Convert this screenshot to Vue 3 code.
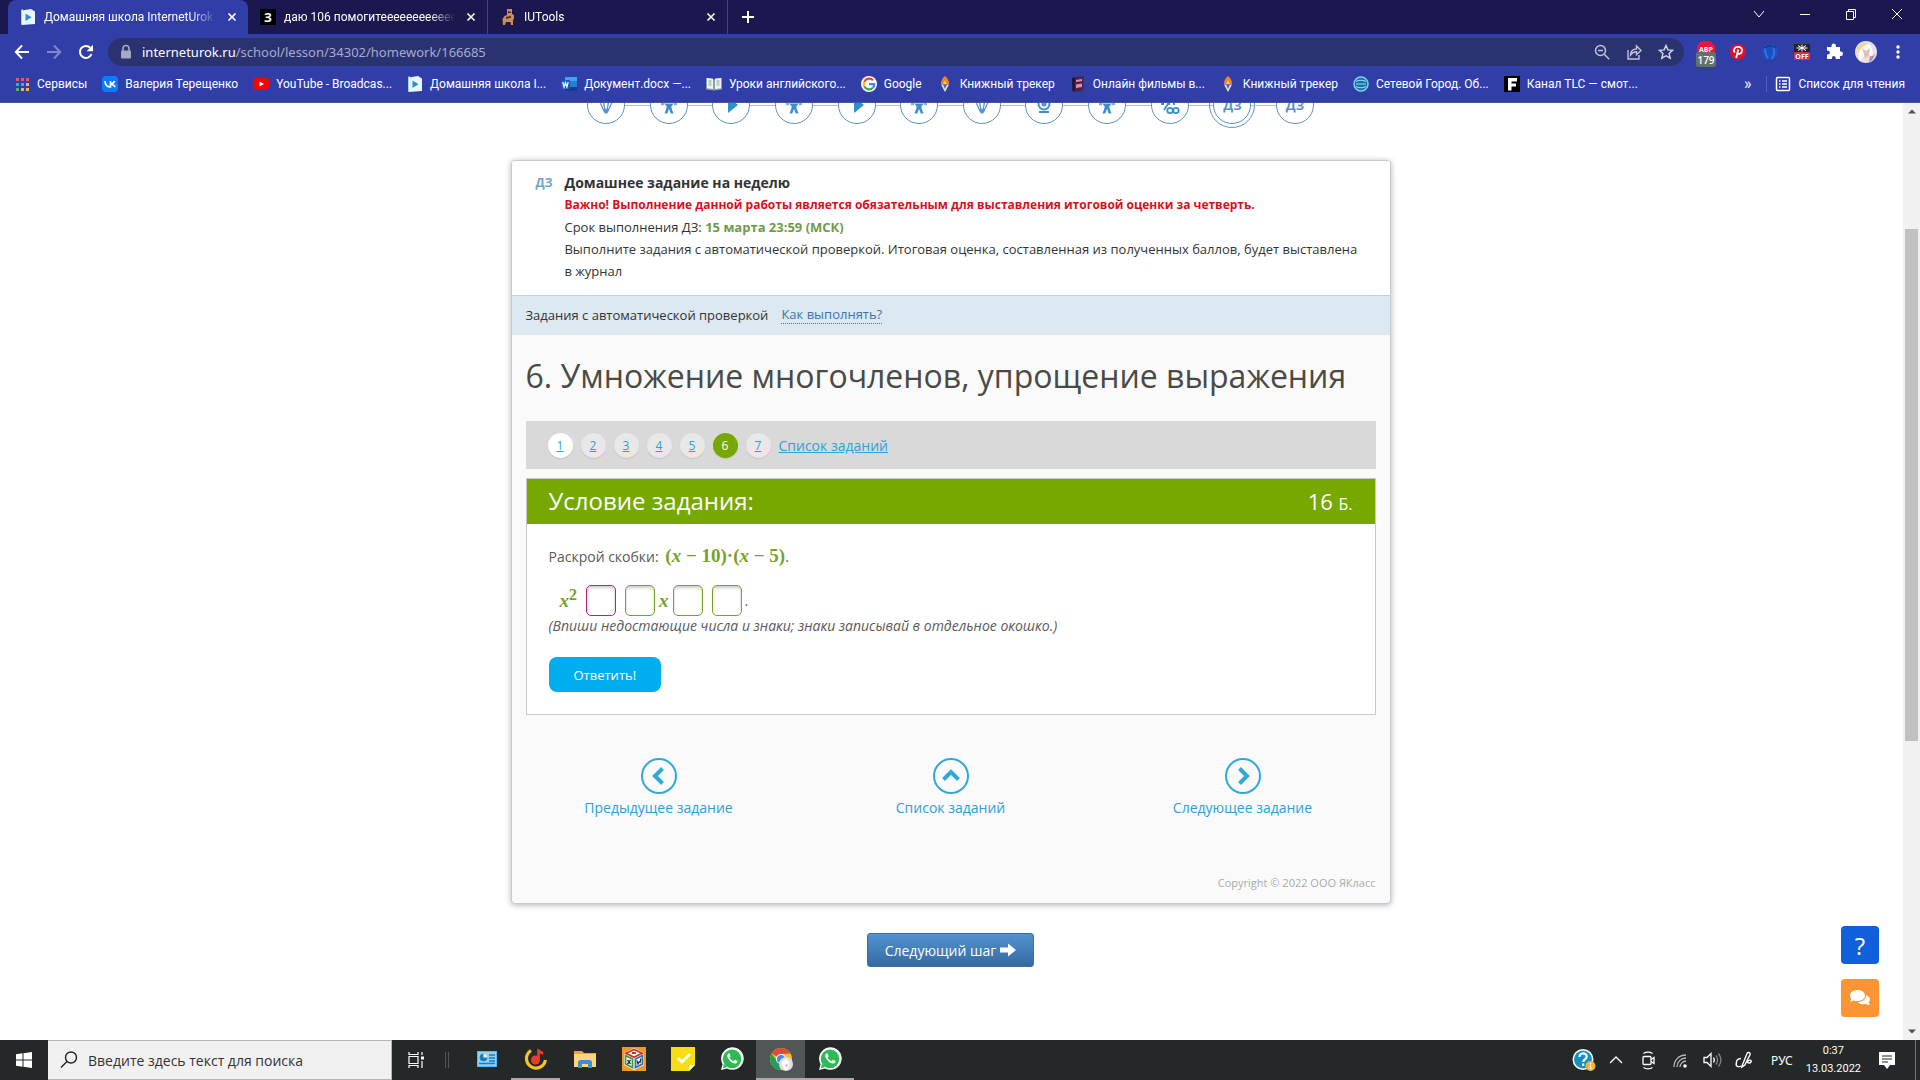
<template>
  <div class="screen">
    <header class="browser">
      <div class="tabstrip">
        <div v-for="tab in tabs" :key="tab.title" class="tab" :class="{ active: tab.active }">
          <svg class="ico" viewBox="0 0 16 16" v-html="icons[tab.icon]"></svg>
          <span class="tab-title">{{ tab.title }}</span>
          <button class="icon-btn close" aria-label="Закрыть вкладку">
            <svg viewBox="0 0 10 10"><path d="M1.5 1.5l7 7M8.5 1.5l-7 7" stroke="#fff" stroke-width="1.7" /></svg>
          </button>
        </div>
        <button class="icon-btn plus" aria-label="Новая вкладка">
          <svg viewBox="0 0 12 12"><path d="M6 0v12M0 6h12" stroke="#fff" stroke-width="2" /></svg>
        </button>
        <div class="window-controls">
          <button v-for="c in controls" :key="c.label" class="icon-btn" :aria-label="c.label">
            <svg viewBox="0 0 12 12" fill="none" stroke="#fff"><path :d="c.d" /></svg>
          </button>
        </div>
      </div>

      <div class="toolbar">
        <button class="icon-btn tool" aria-label="Назад">
          <svg viewBox="0 0 16 16" fill="none" stroke="#fff" stroke-width="2"><path d="M15 8H2M8 1.5L1.8 8 8 14.5" /></svg>
        </button>
        <button class="icon-btn tool" aria-label="Вперёд">
          <svg viewBox="0 0 16 16" fill="none" stroke="#8087cf" stroke-width="2"><path d="M1 8h13M8 1.5L14.2 8 8 14.5" /></svg>
        </button>
        <button class="icon-btn tool" aria-label="Обновить">
          <svg viewBox="0 0 16 16" fill="none" stroke="#fff" stroke-width="2"><path d="M13.5 10.2A6 6 0 1 1 12.3 3.8" /><path d="M15 0.8v6.4H8.6z" fill="#fff" stroke="none" /></svg>
        </button>
        <div class="omnibox">
          <svg class="lock" viewBox="0 0 12 16"><path d="M3 7V4.5a3 3 0 0 1 6 0V7" fill="none" stroke="#a6a9c4" stroke-width="1.6" /><rect x="1" y="6.5" width="10" height="8" rx="1" fill="#a6a9c4" /></svg>
          <span class="url"><b>interneturok.ru</b>/school/lesson/34302/homework/166685</span>
          <button v-for="n in ['zoom', 'share', 'star']" :key="n" class="icon-btn omni" :aria-label="n">
            <svg class="ico" viewBox="0 0 16 16" v-html="icons[n]"></svg>
          </button>
        </div>
        <div class="extensions">
          <button v-for="n in ['abp', 'pin', 'globe', 'off', 'puzzle', 'avatar', 'dots']" :key="n" class="icon-btn ext" :aria-label="n">
            <svg viewBox="0 0 24 32" v-html="icons[n]"></svg>
          </button>
        </div>
      </div>

      <nav class="bookmarks">
        <a v-for="(b, i) in bookmarks" :key="i" href="#" class="bookmark">
          <svg class="ico" viewBox="0 0 16 16" v-html="icons[b.icon]"></svg>
          <span>{{ b.title }}</span>
        </a>
        <span class="more">»</span>
        <a href="#" class="bookmark reading">
          <svg class="ico" viewBox="0 0 16 16" v-html="icons.list"></svg>
          <span>Список для чтения</span>
        </a>
      </nav>
    </header>

    <div class="viewport">
      <main class="page">
        <div class="steps">
          <template v-for="(s, i) in steps" :key="i">
            <i v-if="i" class="line"></i>
            <a href="#" class="step" :class="{ current: i === 10 }">
              <span v-if="s === 'hw'">ДЗ</span>
              <svg v-else viewBox="0 0 20 20" v-html="icons[s]"></svg>
            </a>
          </template>
        </div>

        <section class="card">
          <div class="card-head">
            <span class="mark">ДЗ</span>
            <div>
              <h1>Домашнее задание на неделю</h1>
              <p class="warn">Важно! Выполнение данной работы является обязательным для выставления итоговой оценки за четверть.</p>
              <p>Срок выполнения ДЗ: <b>15 марта 23:59 (МСК)</b></p>
              <p>Выполните задания с автоматической проверкой. Итоговая оценка, составленная из полученных баллов, будет выставлена в&nbsp;журнал</p>
            </div>
          </div>
          <div class="info">
            <span>Задания с автоматической проверкой</span>
            <a href="#">Как выполнять?</a>
          </div>

          <div class="card-body">
            <h2>6. Умножение многочленов, упрощение выражения</h2>
            <nav class="pager">
              <a v-for="n in 7" :key="n" href="#" :class="{ first: n === 1, on: n === 6 }">{{ n }}</a>
              <a href="#" class="all">Список заданий</a>
            </nav>

            <form class="task" @submit.prevent>
              <div class="task-head">
                <span>Условие задания:</span>
                <span class="points">16 <small>Б.</small></span>
              </div>
              <div class="task-body">
                <p class="question">Раскрой скобки: <span class="math expr">(<i>x</i> − 10)·(<i>x</i> − 5)</span>.</p>
                <div class="answer">
                  <span class="math"><i>x</i><sup>2</sup></span>
                  <input v-model="answers[0]" class="focus" aria-label="Первый знак" />
                  <input v-model="answers[1]" aria-label="Первое число" />
                  <span class="math mid"><i>x</i></span>
                  <input v-model="answers[2]" aria-label="Второй знак" />
                  <input v-model="answers[3]" aria-label="Второе число" />
                  <span class="dot">.</span>
                </div>
                <p class="hint">(Впиши недостающие числа и знаки; знаки записывай в отдельное окошко.)</p>
                <button class="submit">Ответить!</button>
              </div>
            </form>

            <nav class="task-nav">
              <a v-for="l in links" :key="l.title" href="#">
                <svg viewBox="0 0 36 36" fill="none" stroke="#2fa8dc">
                  <circle cx="18" cy="18" r="17" stroke-width="2" />
                  <path :d="l.d" stroke-width="4" />
                </svg>
                <span>{{ l.title }}</span>
              </a>
            </nav>
            <p class="copyright">Copyright © 2022 ООО ЯКласс</p>
          </div>
        </section>

        <button class="next">
          Следующий шаг
          <svg viewBox="0 0 16 14"><path d="M0 4.5h8V0.5L16 7l-8 6.5v-4H0z" fill="#fff" /></svg>
        </button>

        <div class="float">
          <button class="help" aria-label="Помощь">?</button>
          <button class="chat" aria-label="Чат">
            <svg viewBox="0 0 20 16" fill="#fff"><path d="M7.5 0C3.3 0 0 2.4 0 5.5 0 6.8.6 8 1.5 8.9L0 11.5c1.8 0 3-.5 3.9-1 1.1.4 2.3.5 3.6.5 4.2 0 7.5-2.4 7.5-5.5S11.7 0 7.5 0z" /><path d="M16 5.2c0 4.2-4 6.800-8.500 6.900 1.300 1.500 3.600 2.400 6 2.100.8-.1 1.500-.2 2.100-.4 1 .6 2.500 1.100 4.400 1l-1.400-2.300C21 10 20 6.200 16 5.200z" /></svg>
          </button>
        </div>
      </main>
      <div class="scrollbar">
        <svg viewBox="0 0 8 5"><path d="M0 4.5L4 .5l4 4z" fill="#505050" /></svg>
        <div class="track"><div class="thumb"></div></div>
        <svg viewBox="0 0 8 5"><path d="M0 .5l4 4 4-4z" fill="#505050" /></svg>
      </div>
    </div>

    <footer class="taskbar">
      <button class="icon-btn start" aria-label="Пуск">
        <svg viewBox="0 0 16 16" fill="#fff"><path d="M0 2.2L6.5 1.3v6.2H0zM7.5 1.2L16 0v7.5H7.5zM0 8.5h6.5v6.2L0 13.8zM7.5 8.5H16V16l-8.5-1.2z" /></svg>
      </button>
      <label class="search">
        <svg viewBox="0 0 18 18" fill="none" stroke="#222" stroke-width="1.4"><circle cx="11" cy="6.5" r="5.5" /><path d="M7 10.5L1 16.5" /></svg>
        <input type="text" placeholder="Введите здесь текст для поиска" />
      </label>
      <button class="icon-btn view" aria-label="Представление задач">
        <svg viewBox="0 0 16 16" fill="none" stroke="#fff" stroke-width="1.2"><path d="M1 0v2.5h9V0M1 16v-2.5h9V16M1 4.5h9v7H1zM14 0v3M14 9v7" /><path d="M13 4.5h3v3h-3z" fill="#fff" stroke="none" /></svg>
      </button>
      <i class="grip"></i>
      <button v-for="(a, i) in apps" :key="i" class="icon-btn app" :class="a.state" :aria-label="a.icon">
        <svg viewBox="0 0 24 24" v-html="icons[a.icon]"></svg>
      </button>
      <div class="tray">
        <svg v-for="n in ['helper', 'up', 'meet', 'wifi', 'sound', 'pen']" :key="n" viewBox="0 0 24 24" v-html="icons[n]"></svg>
        <span class="lang">РУС</span>
        <div class="clock"><span>0:37</span><span>13.03.2022</span></div>
        <svg class="note" viewBox="0 0 24 24" v-html="icons.note"></svg>
        <i class="peek"></i>
      </div>
    </footer>
  </div>
</template>

<script setup>
import { ref } from 'vue'

const answers = ref(['', '', '', ''])

const tabs = [
  { title: 'Домашняя школа InternetUrok.r', icon: 'school', active: true },
  { title: 'даю 106 помогитееееееееееее', icon: 'znanija' },
  { title: 'IUTools', icon: 'iu' },
]

const controls = [
  { label: 'Поиск вкладок', d: 'M1 3l5 6 5-6' },
  { label: 'Свернуть', d: 'M1 6.5h10' },
  { label: 'Развернуть', d: 'M1.5 3.5h7v8h-7zM3.5 3.5v-2h7v8h-2' },
  { label: 'Закрыть', d: 'M1 1l10 10M11 1L1 11' },
]

const bookmarks = [
  { title: 'Сервисы', icon: 'apps' },
  { title: 'Валерия Терещенко', icon: 'vk' },
  { title: 'YouTube - Broadcas...', icon: 'youtube' },
  { title: 'Домашняя школа I...', icon: 'school' },
  { title: 'Документ.docx —...', icon: 'word' },
  { title: 'Уроки английского...', icon: 'book' },
  { title: 'Google', icon: 'google' },
  { title: 'Книжный трекер', icon: 'torch' },
  { title: 'Онлайн фильмы в...', icon: 'film' },
  { title: 'Книжный трекер', icon: 'torch' },
  { title: 'Сетевой Город. Об...', icon: 'city' },
  { title: 'Канал TLC — смот...', icon: 'tlc' },
]

const steps = ['bulb', 'man', 'play', 'man', 'play', 'man', 'bulb', 'cam', 'man', 'percent', 'hw', 'hw']

const links = [
  { title: 'Предыдущее задание', d: 'M21.5 10.5L14 18l7.5 7.5' },
  { title: 'Список заданий', d: 'M10.5 21.5L18 14l7.5 7.5' },
  { title: 'Следующее задание', d: 'M14.5 10.5L22 18l-7.5 7.5' },
]

const apps = [
  { icon: 'panel' },
  { icon: 'music', state: 'open' },
  { icon: 'folder' },
  { icon: 'cube' },
  { icon: 'notes' },
  { icon: 'whatsapp' },
  { icon: 'chrome', state: 'front' },
  { icon: 'whatsapp', state: 'open' },
]

const icons = {
  school: '<path d="M1 1l2-1v15l-2 1z" fill="#9fd3ef"/><path d="M2 1.5L11 0l4 2.5V15L2 16z" fill="#e8f6fd"/><path d="M5.5 4.5v7.5l6-3.7z" fill="#2f8fc9"/>',
  znanija: '<rect width="16" height="16" fill="#000"/><text x="8" y="12.5" text-anchor="middle" font-size="12" font-weight="700" font-family="Open Sans, sans-serif" fill="#fff">З</text>',
  iu: '<path d="M7 0h5v5l2 1v4l-1 1v5h-2l-.5-3H6l-1 3H3l-.5-6 2-3L7 6z" fill="#c98d55"/><path d="M8 2l3 1v1H8zM6 8l5-1v1.5l-5 1.5z" fill="#4a2a20"/>',
  zoom: '<g fill="none" stroke="#bfc2dc" stroke-width="1.5"><circle cx="6.5" cy="6.5" r="5"/><path d="M10.2 10.2l5 5M4 6.5h5"/></g>',
  share: '<g fill="none" stroke="#bfc2dc" stroke-width="1.4"><path d="M2 6v9h11v-4"/><path d="M4.5 11c.3-4 2.5-6 6-6V2l4.5 4.5-4.5 4.2V7.8c-2.8 0-4.5 1-6 3.2z"/></g>',
  star: '<path d="M8 1.5l1.9 4.4 4.8.4-3.6 3.2 1.1 4.7L8 11.7l-4.2 2.5 1.1-4.7L1.3 6.3l4.8-.4z" fill="none" stroke="#d5d8ec" stroke-width="1.4"/>',
  abp: '<path d="M7 5h9l5 5v7H3v-7z" fill="#e4173e"/><text x="12" y="16" text-anchor="middle" font-size="7" font-weight="700" font-family="Open Sans, sans-serif" fill="#fff">ABP</text><rect x="2" y="16" width="20" height="15" rx="2" fill="#63706b"/><text x="12" y="28" text-anchor="middle" font-size="10" font-weight="600" font-family="Open Sans, sans-serif" fill="#fff">179</text>',
  pin: '<circle cx="12" cy="16" r="8" fill="#d8142c"/><path d="M10.2 22l2-8.5M8.8 16.5c-2-2.8 0-5.7 3.2-5.7 3.7 0 4.6 2.7 3.7 5-.9 2.3-3 2.6-4 1.2" fill="none" stroke="#fff" stroke-width="1.8"/>',
  globe: '<circle cx="12" cy="16" r="8" fill="#1c4fc0"/><path d="M8 9.5c-2 4-1 8 2 13M14 9c3 3 3 9 0 14" fill="none" stroke="#2f74e0" stroke-width="2"/><path d="M6 12c3-3 9-3 12 0" fill="none" stroke="#16399a" stroke-width="2"/>',
  off: '<rect x="4" y="8" width="16" height="9" fill="#23232b"/><rect x="4" y="16" width="16" height="8" rx="1" fill="#e0294d"/><path d="M12 8.5v7M8 9.5l8 5M16 9.5l-8 5M6.5 12h11" stroke="#fff"/><text x="12" y="22.8" text-anchor="middle" font-size="7" font-weight="700" font-family="Open Sans, sans-serif" fill="#fff">OFF</text>',
  puzzle: '<path d="M5 11h4.5V9.8a2.2 2.2 0 0 1 4.4 0V11H18v4.5h.8a2.2 2.2 0 0 1 0 4.4H18V23h-4.3v-1a1.9 1.9 0 0 0-3.8 0v1H5v-4.5h1a1.9 1.9 0 0 0 0-3.8H5z" fill="#fff"/>',
  avatar: '<circle cx="12" cy="16" r="11" fill="#e9dfe6"/><path d="M6 25c-2-8-1-15 5-17 6-1 9 4 7 16l-3-6-4 1z" fill="#fff"/><path d="M8 12l4 3 4-3-1 8-4 2z" fill="#e5bfa9"/><path d="M3 12c3-6 8-6 11-3-5 0-8 3-9 8z" fill="#f0d58c"/><path d="M16 20c2 1 4-1 5-3-1 5-3 8-6 9z" fill="#b48ab8"/>',
  dots: '<g fill="#fff"><circle cx="12" cy="11" r="1.7"/><circle cx="12" cy="16" r="1.7"/><circle cx="12" cy="21" r="1.7"/></g>',
  apps: '<g><path d="M2 2h3v3H2zM7 2h3v3H7zM12 2h3v3h-3z" fill="#e4566a"/><path d="M2 7h3v3H2z" fill="#4fae7b"/><path d="M7 7h3v3H7z" fill="#4d9df0"/><path d="M12 7h3v3h-3z" fill="#f0b548"/><path d="M2 12h3v3H2z" fill="#4fae7b"/><path d="M7 12h3v3H7zM12 12h3v3h-3z" fill="#f0b548"/></g>',
  vk: '<rect width="16" height="16" rx="4" fill="#0a7cff"/><path d="M3 5c.2 4 2.3 6 5.5 6V5M8.5 8.3C10.5 8 12 6.5 12.5 5M9 8.2c2 .3 3.5 1.5 4 2.9" fill="none" stroke="#fff" stroke-width="1.7"/>',
  youtube: '<rect y="2" width="16" height="12" rx="3.5" fill="#f00"/><path d="M6.5 5.5v5L11 8z" fill="#fff"/>',
  word: '<rect x="4" y="1" width="12" height="14" rx="1" fill="#2b7cd3"/><path d="M4 1h12v4H4z" fill="#41a5ee"/><path d="M4 11h12v4H4z" fill="#103f91"/><rect y="4" width="9" height="9" rx="1" fill="#185abd"/><path d="M1.8 6l1.3 5 1.4-4.5L5.9 11l1.3-5" fill="none" stroke="#fff" stroke-width="1.2"/>',
  book: '<path d="M0 2l7 .8L8 4l1-1.2L16 2v11.5L8 14.5 0 13.5z" fill="#8aa0a8"/><path d="M1 2l6 .8V13l-6-.8zM9 2.8L15 2v10.2L9 13z" fill="#f0f3ea"/><path d="M2.5 5h3M2.5 7h3M2.5 9h3M10.5 5h3M10.5 7h3M10.5 9h3" stroke="#8aa"/>',
  google: '<circle cx="8" cy="8" r="8" fill="#fff"/><g fill="none" stroke-width="2.2"><path d="M12 4.3A5.3 5.3 0 0 0 3.3 5.7" stroke="#ea4335"/><path d="M3.3 5.7a5.3 5.3 0 0 0 0 4.7" stroke="#fbbc05"/><path d="M3.3 10.4A5.3 5.3 0 0 0 11.7 12" stroke="#34a853"/><path d="M11.7 12A5 5 0 0 0 13.2 8.1H8" stroke="#4285f4"/></g>',
  torch: '<path d="M8 0c3 2.5 4 4.5 4 8H4c0-3.5 1-5.5 4-8z" fill="#f5821f"/><path d="M8 4l2 4H6z" fill="#ffd04a"/><path d="M4 8.5h8L8 16z" fill="#e6e2dc"/><path d="M6 8.5h4L8 13z" fill="#5d6480"/>',
  film: '<path d="M3 1.5l11-1.5-1 5 1 4-1 6-9 1-1-5z" fill="#4a2450"/><path d="M2 2l3-.5L4.5 15l-2 .5z" fill="#1f1430"/><path d="M6 4l6-1v2l-6 1zM6 8.5l6-1v3.5l-6 1z" fill="#e58aa8"/>',
  city: '<circle cx="8" cy="8" r="7" fill="#1b6fa8" stroke="#7fd0e8" stroke-width="1.5"/><path d="M3 5.5c3-1.5 7-1.5 10 0M3 8h10M3 10.5c3 1.5 7 1.5 10 0" fill="none" stroke="#8fe0ee" stroke-width="1.2"/>',
  tlc: '<rect width="16" height="16" fill="#000"/><path d="M4 2h9v3.5H7.5V7.5H12v3H7.5V14.5H4z" fill="#fff"/>',
  list: '<g fill="none" stroke="#fff" stroke-width="1.5"><rect x="1.5" y="1.5" width="13" height="13" rx="1"/><path d="M7 5h5M7 8h5M7 11h5M4 5h1.5M4 8h1.5M4 11h1.5"/></g>',
  bulb: '<path d="M3 5l5 11h4l5-11M7 5l2 10M13 5l-2 10" fill="none" stroke="#5a92cf" stroke-width="1.3"/><path d="M7.5 14h5l-1 4.500h-3z" fill="#5a92cf"/>',
  man: '<path d="M2 9h3M15 9h3" stroke="#7fb2dc" stroke-width="2.5"/><path d="M5 8.5h10L12.5 11v2l2 5.5h-2.7L10 14l-1.800 4.500H5.500l2-5.500v-2z" fill="#3d8fca"/>',
  play: '<path d="M7 2l10 8-10 8z" fill="#2f8fc9"/>',
  cam: '<g fill="none" stroke="#3d8fca" stroke-width="2"><circle cx="10" cy="9" r="5.5"/><circle cx="10" cy="9" r="1.5"/><path d="M5 17h10"/></g>',
  percent: '<g fill="none" stroke="#3d8fca" stroke-width="1.8"><path d="M1 9h3M7 9h3M13 9h2M4 15l4-6"/><circle cx="10" cy="15.5" r="2.7"/><circle cx="16" cy="15.5" r="2.7"/></g>',
  panel: '<rect x="2" y="4" width="20" height="16" fill="#58b9ee"/><rect x="3" y="5" width="18" height="14" fill="#8fd3f7"/><circle cx="8.5" cy="10.5" r="3.8" fill="#1f78c4"/><path d="M8.5 10.5V6.7a3.8 3.8 0 0 1 3.8 3.8z" fill="#fff"/><path d="M14 8h6M14 11h6M14 14h6M4 16.5h16" stroke="#2278bd" stroke-width="1.4"/>',
  music: '<path d="M7 3.5A9.5 9.5 0 1 0 21.4 13" fill="none" stroke="#f7c51e" stroke-width="3.2"/><circle cx="11.5" cy="13" r="4.5" fill="#ef3b2d"/><path d="M13.2 13V1.5l6 3.5v3l-3.4-1.5V13z" fill="#ef3b2d"/>',
  folder: '<path d="M1 4h8l2 2h12v14H1z" fill="#e4a83a"/><path d="M1 7h22v13H1z" fill="#fbd67a"/><path d="M5 21v-6.5l2-1.5h10l2 1.5V21h-4v-4H9v4z" fill="#3b8fd6"/>',
  cube: '<rect width="24" height="24" fill="#f39a1d"/><path d="M12 1l10 5v12l-10 5-10-5V6z" fill="#fff"/><path d="M12 2.5L20 6.3l-8 4-8-4z" fill="none" stroke="#c8342c" stroke-width="1.8"/><path d="M3.5 8.5l7 3.5v8.5l-7-3.5z" fill="none" stroke="#3c9a3c" stroke-width="1.8"/><path d="M20.5 8.5l-7 3.5v8.5l7-3.5z" fill="none" stroke="#2872b8" stroke-width="1.8"/><path d="M5.5 13l3 4M8.5 13l-3 4M15 13.5l1 3.5 1-2 1 .5 1-4" fill="none" stroke="#333" stroke-width="1.3"/><path d="M10 6h4" stroke="#c8342c" stroke-width="2"/>',
  notes: '<path d="M0 0h24v18l-6 6H0z" fill="#f7de12"/><path d="M18 24v-6h6z" fill="#fff"/><path d="M7 11l4 4 8-8" fill="none" stroke="#fff" stroke-width="2.6"/>',
  whatsapp: '<path d="M1 23l1.6-5.8A11.3 11.3 0 1 1 7 21.5z" fill="#fff"/><circle cx="12" cy="11.8" r="9.3" fill="#2dbb55"/><path d="M2.9 21.2l1-4.4 3.4 3.3z" fill="#2dbb55"/><path d="M8.7 6.3c-2 .8-2 3.2-.2 5.8 2 3 4.9 4.9 7.2 4.3 1.8-.5 2-1.6 1.8-2.3l-2.6-1.3-1.3 1.5c-1.9-.8-3.2-2-4-3.7l1-1.3-1-2.7z" fill="#fff"/>',
  chrome: '<circle cx="12" cy="12" r="11" fill="#fbc116"/><path d="M12 12L2.5 6.5A11 11 0 0 1 21.5 6.5L12 7z" fill="#dd4b3e"/><path d="M2.5 6.5A11 11 0 0 0 11 23l4-8-7-1z" fill="#1fa15d"/><circle cx="12" cy="12" r="5" fill="#fff"/><circle cx="12" cy="12" r="4" fill="#4688f1"/><circle cx="17" cy="17" r="7" fill="#e6dcea"/><path d="M13 15c2-4 6-3 7 0 1 3-1 7-3 8-3-1-4-5-4-8z" fill="#fff"/><path d="M15 16l2 2 2-2-1 5z" fill="#d8b09a"/>',
  helper: '<circle cx="11" cy="11.5" r="10.5" fill="#fff"/><circle cx="11" cy="11.5" r="9" fill="#1590c4"/><path d="M7.5 9c0-5 7.5-4.6 7.2-.3-.2 2.6-3.5 2.6-3.5 5.3M11.2 15.5v2.5" fill="none" stroke="#fff" stroke-width="2.2"/><circle cx="18.5" cy="18" r="5" fill="#f6b23c"/><path d="M18.5 15v1.5M18.5 17.5v4" stroke="#fff" stroke-width="1.5"/>',
  up: '<path d="M6 15l6-6 6 6" fill="none" stroke="#fff" stroke-width="1.4"/>',
  meet: '<g fill="none" stroke="#fff" stroke-width="1.3"><rect x="7" y="8.5" width="8" height="8" rx="1"/><path d="M15 11.5l3-2v6l-3-2M7.5 5.5c2.5-1.8 6.5-1.8 9 0M7.5 19.5c2.5 1.8 6.5 1.8 9 0"/></g>',
  wifi: '<g fill="none" stroke="#b9bbbb" stroke-width="1.3"><path d="M6 19C6 12 11 7 18 7M9 19c0-5 4-9 9-9M12 19c0-3 3-6 6-6"/></g><circle cx="17" cy="18" r="1.8" fill="#fff"/>',
  sound: '<g fill="none" stroke="#fff" stroke-width="1.3"><path d="M4 9.5h3l4-4v13l-4-4H4z"/><path d="M13.5 9.5c1 1.5 1 3.5 0 5"/><path d="M16 7.5c2 2.5 2 6.5 0 9M18.5 5.5c3 4 3 9 0 13" stroke="#808484"/></g>',
  pen: '<g fill="none" stroke="#fff" stroke-width="1.4"><path d="M10 18L15 5.5c1-1.8 3.8-.8 3 1.2l-5.2 10.3-3 2z"/><path d="M9 10.5c-3 0-5 2-4.5 4.5M4.5 14.5c-1.5 4 2 5 4.5 3.5M15 14c2-3 5-2 4 0-1 1.5-3 1-4 0"/></g>',
  note: '<path d="M4 4h16v13h-5l-3 4-3-4H4z" fill="#fff"/><path d="M7 8h10M7 11h10M7 14h6" stroke="#222" stroke-width="1.2"/>',
}
</script>

<style>
body {
  background: #fff;
}
</style>

<style scoped>
* {
  box-sizing: border-box;
}
.screen {
  display: flex;
  flex-direction: column;
  height: 100vh;
  font-family: "Open Sans", "Noto Sans", sans-serif;
  overflow: hidden;
}
p, h1, h2 {
  margin: 0;
}
a {
  text-decoration: none;
}
button, input {
  font-family: inherit;
}
.icon-btn {
  display: flex;
  align-items: center;
  justify-content: center;
  padding: 0;
  border: none;
  background: none;
  flex-shrink: 0;
}
.ico {
  width: 16px;
  height: 16px;
  flex-shrink: 0;
}

/* browser */
.browser {
  flex-shrink: 0;
  background: #313ea8;
  color: #fff;
  font-family: Roboto, "Open Sans", sans-serif;
  font-size: 12px;
  border-bottom: 1px solid #4b5593;
}
.tabstrip {
  display: flex;
  height: 34px;
  padding-left: 8px;
  background: #1b184f;
}
.tab {
  display: flex;
  align-items: center;
  gap: 8px;
  width: 240px;
  padding: 0 8px 0 12px;
  border-right: 1px solid #444280;
}
.tab.active {
  background: #313ea8;
  border-radius: 8px 8px 0 0;
  border-right: none;
}
.tab-title {
  flex: 1;
  overflow: hidden;
  white-space: nowrap;
  mask-image: linear-gradient(90deg, #000 85%, transparent);
}
.close svg {
  width: 10px;
}
.close {
  width: 16px;
}
.plus {
  width: 40px;
}
.plus svg {
  width: 12px;
}
.window-controls {
  display: flex;
  height: 28px;
  margin-left: auto;
}
.window-controls button {
  width: 46px;
}
.window-controls svg {
  width: 12px;
}
.toolbar {
  display: flex;
  align-items: center;
  height: 35px;
  padding: 0 6px;
}
.tool {
  width: 32px;
}
.tool svg {
  width: 16px;
}
.omnibox {
  display: flex;
  flex: 1;
  align-items: center;
  height: 28px;
  margin: 0 6px;
  padding: 0 2px 0 12px;
  border-radius: 14px;
  background: #2b3270;
}
.lock {
  width: 12px;
  height: 16px;
  margin-right: 10px;
}
.url {
  flex: 1;
  font-family: "Noto Sans", sans-serif;
  font-size: 13px;
  color: #a6abd2;
}
.url b {
  font-weight: 400;
  color: #fff;
}
.omni {
  width: 32px;
}
.extensions {
  display: flex;
}
.ext {
  width: 32px;
}
.ext svg {
  width: 24px;
  height: 32px;
}
.bookmarks {
  display: flex;
  align-items: center;
  gap: 15px;
  height: 33px;
  padding: 0 15px 4px 14px;
}
.bookmark {
  display: flex;
  align-items: center;
  gap: 7px;
  color: #fff;
  white-space: nowrap;
}
.more {
  margin-left: auto;
  font-size: 16px;
}
.reading {
  padding-left: 8px;
  border-left: 1px solid #545fb8;
}

/* page */
.viewport {
  display: flex;
  flex: 1;
  min-height: 0;
}
.page {
  position: relative;
  flex: 1;
  padding-right: 2px;
  overflow: hidden;
  background: #fff;
}
.scrollbar {
  display: flex;
  flex-direction: column;
  align-items: center;
  width: 17px;
  padding: 6px 0;
  background: #f1f1f1;
}
.scrollbar svg {
  width: 8px;
  height: 5px;
}
.track {
  flex: 1;
  width: 13px;
  padding-top: 115px;
}
.thumb {
  height: 64%;
  background: #c1c1c1;
}
.steps {
  display: flex;
  align-items: center;
  max-width: 727px;
  height: 46px;
  margin: -21px auto 32px;
}
.line {
  flex: 1;
  height: 1px;
  background: #b4bcc0;
}
.step {
  display: flex;
  align-items: center;
  justify-content: center;
  width: 38px;
  height: 38px;
  border: 1px solid #5a92bf;
  border-radius: 50%;
  color: #5a92c4;
  font-size: 13px;
  font-weight: 700;
}
.step svg {
  width: 20px;
}
.step.current {
  outline: 1px solid #5a92bf;
  outline-offset: 3px;
}
.card {
  max-width: 880px;
  margin: 0 auto 29px;
  border: 1px solid #c5c9d0;
  border-radius: 4px;
  background: #fafafa;
  box-shadow: 0 1px 6px rgba(0, 0, 0, 0.3);
  overflow: hidden;
}
.card-head {
  display: flex;
  gap: 12px;
  padding: 11px 20px 13px 24px;
  background: #fff;
  color: #333;
  font-size: 13px;
  line-height: 22px;
}
.mark {
  color: #6fa3cf;
  font-size: 12px;
  font-weight: 700;
}
.card-head h1 {
  font-size: 14px;
  line-height: 22px;
}
.card-head .warn {
  color: #d9101c;
  font-size: 12px;
  font-weight: 700;
}
.card-head p b {
  color: #6f9a4a;
}
.info {
  display: flex;
  align-items: center;
  gap: 13px;
  height: 40px;
  padding: 0 14px 2px;
  border-top: 1px solid #c3ced8;
  background: #dce9f3;
  color: #333;
  font-size: 13px;
}
.info a {
  border-bottom: 1px dotted #3a76ab;
  color: #3a76ab;
}
.card-body {
  padding: 17px 14px 10px;
}
h2 {
  color: #4a4a45;
  font-size: 32px;
  font-weight: 400;
  line-height: 48px;
}
.pager {
  display: flex;
  align-items: center;
  gap: 8px;
  height: 48px;
  margin: 21px 0 9px;
  padding: 0 22px;
  background: #d9d9d9;
}
.pager a {
  width: 25px;
  border-radius: 50%;
  background: #e8e8e8;
  box-shadow: 0 1px 1px #c3c3c3;
  color: #2f9fd6;
  font-size: 12px;
  line-height: 25px;
  text-align: center;
  text-decoration: underline;
}
.pager .first {
  background: #fff;
}
.pager .on {
  background: #76a800;
  color: #fff;
  text-decoration: none;
}
.pager .all {
  width: auto;
  background: none;
  box-shadow: none;
  font-size: 14px;
}
.task {
  border: 1px solid #c9c9c9;
  background: #fff;
}
.task-head {
  display: flex;
  align-items: center;
  justify-content: space-between;
  height: 45px;
  padding: 0 22px 2px;
  background: #76a800;
  color: #fff;
  font-size: 24px;
}
.points {
  font-size: 22px;
}
.points small {
  font-size: 16px;
}
.task-body {
  padding: 20px 22px 22px;
  color: #5a5a5a;
  font-size: 14px;
}
.question {
  line-height: 24px;
}
.math {
  color: #76a22a;
  font-family: "Liberation Serif", serif;
  font-size: 19px;
  font-weight: 700;
}
.expr {
  margin-left: 3px;
}
.math sup {
  font-size: 16px;
  line-height: 0;
}
.answer {
  display: flex;
  align-items: center;
  gap: 9px;
  margin-top: 16px;
  padding-left: 11px;
}
.answer input {
  width: 30px;
  height: 31px;
  padding: 0;
  border: 1px solid #76a22a;
  border-radius: 5px;
  box-shadow: inset 0 2px 3px rgba(0, 0, 0, 0.2);
  text-align: center;
}
.answer .focus {
  border-color: #b3247c;
}
.mid {
  margin: 0 -5px;
}
.dot {
  margin-left: -6px;
}
.hint {
  line-height: 20px;
  font-style: italic;
}
.submit {
  height: 35px;
  margin-top: 21px;
  padding: 0 25px;
  border: none;
  border-radius: 8px;
  background: #00aeef;
  color: #fff;
  font-size: 13px;
}
.task-nav {
  display: grid;
  grid-template-columns: repeat(3, 292px);
  justify-content: center;
  margin-top: 43px;
}
.task-nav a {
  display: flex;
  flex-direction: column;
  align-items: center;
  gap: 4px;
  color: #2f9fd6;
  font-size: 14px;
  line-height: 20px;
}
.task-nav svg {
  width: 36px;
}
.copyright {
  margin-top: 55px;
  color: #aaa;
  font-size: 11px;
  line-height: 20px;
  text-align: right;
}
.next {
  display: flex;
  align-items: center;
  gap: 4px;
  height: 34px;
  margin: 0 auto;
  padding: 0 17px;
  border: 1px solid #3a6fa5;
  border-radius: 3px;
  background: linear-gradient(#5292d0, #356aa0);
  color: #fff;
  font-size: 14px;
  font-weight: 500;
}
.next svg {
  width: 16px;
}
.float {
  position: absolute;
  right: 24px;
  bottom: 23px;
  display: grid;
  gap: 15px;
}
.float button {
  display: flex;
  align-items: center;
  justify-content: center;
  width: 38px;
  height: 38px;
  padding: 0;
  border: none;
  border-radius: 4px;
  color: #fff;
  font-size: 24px;
}
.help {
  background: #1060dc;
}
.chat {
  background: #fb9433;
}
.chat svg {
  width: 20px;
}

/* taskbar */
.taskbar {
  display: flex;
  flex-shrink: 0;
  height: 40px;
  background: #242828;
  color: #fff;
}
.start {
  width: 48px;
}
.start svg {
  width: 16px;
}
.search {
  display: flex;
  align-items: center;
  gap: 10px;
  width: 344px;
  padding-left: 12px;
  border: 1px solid #b5b5b5;
  border-left: none;
  background: #f1f1f1;
}
.search svg {
  width: 18px;
}
.search input {
  flex: 1;
  border: none;
  padding: 0;
  background: none;
  font-size: 14px;
}
.search input::placeholder {
  color: #333;
}
.view {
  width: 48px;
}
.view svg {
  width: 16px;
}
.grip {
  width: 4px;
  height: 16px;
  margin: 12px 13px 0 5px;
  border: solid #555;
  border-width: 0 1px;
}
.app {
  width: 49px;
  border-bottom: 2px solid transparent;
}
.app svg {
  width: 24px;
}
.open {
  border-color: #b0a6ac;
}
.front {
  border-color: #b0a6ac;
  background: #515656;
}
.tray {
  display: flex;
  align-items: center;
  margin-left: auto;
  font-family: "Noto Sans", sans-serif;
  font-size: 12px;
}
.tray svg {
  width: 24px;
  margin-right: 8px;
}
.lang {
  margin: 0 13px 0 7px;
}
.clock {
  display: flex;
  flex-direction: column;
  font-family: Roboto, sans-serif;
  font-size: 11px;
  line-height: 18px;
  text-align: center;
}
.tray .note {
  margin: 0 16px 0 14px;
}
.peek {
  width: 5px;
  height: 40px;
  border-left: 1px solid #777;
}
</style>
